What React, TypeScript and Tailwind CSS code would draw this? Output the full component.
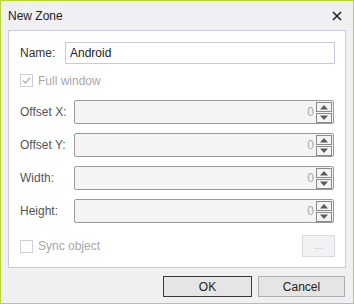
import React from 'react';

const Spinner: React.FC = () => (
  <div className="flex flex-col gap-[1px] mr-[1px]">
    <div className="w-[16px] h-[10px] border border-[#8a8a8a] bg-[#f4f4f4] flex items-center justify-center">
      <svg width="10" height="6" viewBox="0 0 10 6"><path d="M1 5.5 L5 1 L9 5.5 Z" fill="#5a5a5a" /></svg>
    </div>
    <div className="w-[16px] h-[10px] border border-[#8a8a8a] bg-[#f4f4f4] flex items-center justify-center">
      <svg width="10" height="6" viewBox="0 0 10 6"><path d="M1 0.5 L5 5 L9 0.5 Z" fill="#5a5a5a" /></svg>
    </div>
  </div>
);

const NumberRow: React.FC<{ label: string }> = ({ label }) => (
  <div className="flex items-center h-[24px]">
    <span className="w-[54px] text-[#555]">{label}</span>
    <div className="flex-1 h-[24px] border border-[#9a9a9a] rounded-[2px] bg-[#f4f4f4] flex items-center justify-end">
      <span className="text-[#a9a9a9] mr-[2px]">0</span>
      <Spinner />
    </div>
  </div>
);

const Checkbox: React.FC<{ checked?: boolean; label: string }> = ({ checked, label }) => (
  <div className="flex items-center gap-[5px]">
    <div className="w-[13px] h-[13px] border border-[#cfcfdb] bg-white flex items-center justify-center">
      {checked && (
        <svg width="9" height="9" viewBox="0 0 9 9"><path d="M1 4.5 L3.5 7 L8 1.5" stroke="#b5b5b5" strokeWidth="1.4" fill="none" /></svg>
      )}
    </div>
    <span className="text-[#a8a8a8]">{label}</span>
  </div>
);

export default function App() {
  return (
    <div
      className="w-[354px] h-[304px] border border-[#b7d43a] bg-[#f0f0f3] flex flex-col text-[12px] leading-none"
      style={{ fontFamily: '"Liberation Sans", Arial, sans-serif' }}
    >
      <div className="h-[29px] flex items-center justify-between pl-[7px] pr-[11px]">
        <span className="text-[#222] text-[12px]">New Zone</span>
        <svg width="10" height="10" viewBox="0 0 10 10">
          <path d="M1 1 L9 9 M9 1 L1 9" stroke="#222" strokeWidth="1.6" />
        </svg>
      </div>

      <div className="mx-[7px] h-[238px] border border-[#cacade] bg-white pl-[11px] pr-[10px] pt-[11px] flex flex-col">
        <div className="flex items-center h-[22px]">
          <span className="w-[45px] text-[#333]">Name:</span>
          <div className="flex-1 h-[22px] border border-[#c8c8de] bg-white flex items-center px-[4px] text-[#222]">
            Android
          </div>
        </div>

        <div className="mt-[10px]">
          <Checkbox checked label="Full window" />
        </div>

        <div className="mt-[13px] flex flex-col gap-[9px] pr-[1px]">
          <NumberRow label="Offset X:" />
          <NumberRow label="Offset Y:" />
          <NumberRow label="Width:" />
          <NumberRow label="Height:" />
        </div>

        <div className="mt-[12px] h-[22px] flex items-center justify-between">
          <Checkbox label="Sync object" />
          <div className="w-[33px] h-[22px] border border-[#dadae0] bg-[#f2f2f4] flex items-center justify-center text-[#c0c0c0] text-[10px]">
            ...
          </div>
        </div>
      </div>

      <div className="flex justify-end gap-[6px] pr-[8px] mt-[8px]">
        <button className="w-[89px] h-[21px] border border-[#3a3a3a] bg-[#e5e5e5] text-[#222] text-[12px]">OK</button>
        <button className="w-[87px] h-[21px] border border-[#adadad] bg-[#e5e5e5] text-[#222] text-[12px]">Cancel</button>
      </div>
    </div>
  );
}
